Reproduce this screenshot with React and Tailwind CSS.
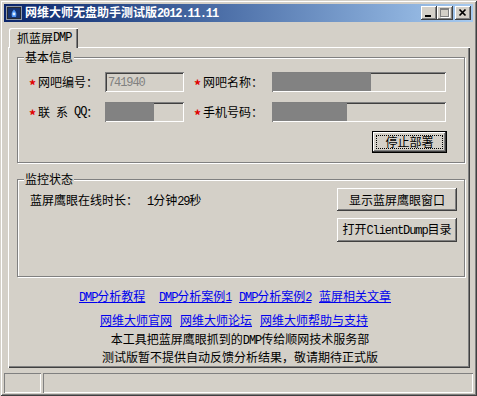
const RAISED =
  "shadow-[inset_-1px_-1px_0_#404040,inset_1px_1px_0_#ffffff,inset_-2px_-2px_0_#808080,inset_2px_2px_0_#d4d0c8]";

function L({ children }) {
  return <span className="font-['Liberation_Mono',monospace] text-[12px] tracking-[-1.1px]">{children}</span>;
}

function Icon() {
  return (
    <svg width="16" height="16" viewBox="0 0 16 16" className="shrink-0">
      <rect x="0.5" y="1.5" width="15" height="13" fill="#262a33" stroke="#8e97a8" />
      <rect x="2" y="3" width="12" height="10" fill="#17326e" />
      <path d="M8 4.5 C5.5 6.5 5.2 9.5 6 12 L10 12 C10.8 9.5 10.5 6.5 8 4.5Z" fill="#4f95f5" />
      <circle cx="8" cy="9" r="1.4" fill="#dfeeff" />
    </svg>
  );
}

function CapBtn({ children, className = "" }) {
  return (
    <div className={`w-[16px] h-[14px] bg-[#d4d0c8] ${RAISED} ${className}`}>{children}</div>
  );
}

function Star() {
  return <span className="inline-block w-[9px] text-[#e00000] text-[14px] font-bold translate-y-[3px]">*</span>;
}

function Input({ gray = 0, text, w }) {
  return (
    <div
      className={`${w} h-[20px] bg-[#d4d0c8] shadow-[inset_1px_1px_0_#808080,inset_-1px_-1px_0_#ffffff,inset_2px_2px_0_#404040,inset_-2px_-2px_0_#d4d0c8] flex items-center`}
    >
      {text ? (
        <span className="pl-[3px] text-[#808080]">{text}</span>
      ) : (
        <div className="h-[18px] bg-[#828282] self-start mt-px" style={{ width: gray }} />
      )}
    </div>
  );
}

function Btn({ children, className = "" }) {
  return (
    <div className={`bg-[#d4d0c8] flex items-center justify-center whitespace-nowrap ${RAISED} ${className}`}>
      {children}
    </div>
  );
}

function Group({ title, className = "", children }) {
  return (
    <div
      className={`relative ml-[9px] w-[448px] border border-[#808080] shadow-[inset_1px_1px_0_#ffffff,1px_1px_0_#ffffff] ${className}`}
    >
      <span className="absolute left-[6px] -top-[8px] bg-[#d4d0c8] px-[1px]">{title}</span>
      {children}
    </div>
  );
}

function A({ children, className = "" }) {
  return <span className={`text-[#0000ee] underline whitespace-nowrap ${className}`}>{children}</span>;
}

export default function App() {
  return (
    <div className="w-[477px] h-[396px] bg-[#d4d0c8] p-[4px] pb-[3px] flex flex-col font-['Noto_Sans_CJK_SC',sans-serif] text-[12px] leading-[14px] text-black overflow-hidden shadow-[inset_1px_1px_0_#d4d0c8,inset_-1px_-1px_0_#404040,inset_2px_2px_0_#ffffff,inset_-2px_-2px_0_#808080]">
      {/* title bar */}
      <div className="h-[18px] shrink-0 flex items-center bg-linear-to-r from-[#0a246a] to-[#a6caf0] pl-[2px] pr-[2px]">
        <Icon />
        <span className="ml-[3px] text-white font-bold whitespace-nowrap">
          网维大师无盘助手测试版<L>2012.11.11</L>
        </span>
        <div className="ml-auto flex items-center">
          <CapBtn>
            <svg width="16" height="14">
              <rect x="4" y="9" width="6" height="2" fill="#000" />
            </svg>
          </CapBtn>
          <CapBtn>
            <svg width="16" height="14">
              <rect x="3.5" y="2.5" width="8" height="8" fill="none" stroke="#808080" />
              <rect x="3" y="3" width="9" height="1" fill="#808080" />
              <path d="M12.5 3 V11.5 H4" fill="none" stroke="#ffffff" />
            </svg>
          </CapBtn>
          <CapBtn className="ml-[2px]">
            <svg width="16" height="14">
              <path d="M4.5 3.5 L10.5 9.5 M10.5 3.5 L4.5 9.5" stroke="#000" strokeWidth="1.7" />
            </svg>
          </CapBtn>
        </div>
      </div>

      {/* tab header */}
      <div className="mt-[6px] pl-[5px] flex shrink-0">
        <div className="relative z-10 -mb-px h-[20px] w-[69px] bg-[#d4d0c8] rounded-tl-[2px] shadow-[inset_1px_1px_0_#ffffff,inset_-1px_0_0_#404040,inset_-2px_0_0_#808080] flex items-center pl-[8px] whitespace-nowrap">
          抓蓝屏<L>DMP</L>
        </div>
      </div>

      {/* tab panel */}
      <div className="ml-[4px] w-[462px] h-[321px] shrink-0 flex flex-col shadow-[inset_1px_1px_0_#ffffff,inset_-1px_-1px_0_#404040,inset_-2px_-2px_0_#808080]">
        <Group title="基本信息" className="mt-[10px] h-[106px] pt-[14px] pl-[11px]">
          <div className="flex items-center h-[20px]">
            <span className="w-[76px] flex items-center whitespace-nowrap">
              <Star />网吧编号：
            </span>
            <Input w="w-[79px]" text={<L>741940</L>} />
            <span className="ml-[10px] w-[78px] flex items-center whitespace-nowrap">
              <Star />网吧名称：
            </span>
            <Input w="w-[174px]" gray={99} />
          </div>
          <div className="flex items-center h-[20px] mt-[10px]">
            <span className="w-[76px] flex items-center whitespace-nowrap">
              <Star />联{"\u2002"}系{"\u2002"}<L>QQ</L>：
            </span>
            <Input w="w-[79px]" gray={49} />
            <span className="ml-[10px] w-[78px] flex items-center whitespace-nowrap">
              <Star />手机号码：
            </span>
            <Input w="w-[174px]" gray={75} />
          </div>
          <div className="flex justify-end pr-[17px] mt-[9px]">
            <div className="w-[75px] h-[22px] border border-black flex">
              <Btn className="flex-1">
                <span className="w-[67px] h-[14px] leading-[12px] border border-dotted border-black flex items-center justify-center">
                  停止部署
                </span>
              </Btn>
            </div>
          </div>
        </Group>

        <Group title="监控状态" className="mt-[16px] h-[98px] flex">
          <div className="pl-[12px] pt-[13px] whitespace-nowrap">
            蓝屏鹰眼在线时长：
            <span className="ml-[9px]">
              <L>1</L>分钟<L>29</L>秒
            </span>
          </div>
          <div className="ml-auto mr-[7px] pt-[8px] flex flex-col gap-[7px]">
            <Btn className="w-[120px] h-[23px]">显示蓝屏鹰眼窗口</Btn>
            <Btn className="w-[120px] h-[24px]">
              <span>
                打开<L>ClientDump</L>目录
              </span>
            </Btn>
          </div>
        </Group>

        <div className="flex pl-[71px] mt-[12px]">
          <span className="w-[66px]"><A><L>DMP</L>分析教程</A></span>
          <span className="w-[72px] ml-[14px]"><A><L>DMP</L>分析案例<L>1</L></A></span>
          <span className="w-[72px] ml-[8px]"><A><L>DMP</L>分析案例<L>2</L></A></span>
          <span className="w-[72px] ml-[8px]"><A>蓝屏相关文章</A></span>
        </div>
        <div className="flex pl-[92px] mt-[8px]">
          <span className="w-[72px]"><A>网维大师官网</A></span>
          <span className="w-[72px] ml-[8px]"><A>网维大师论坛</A></span>
          <span className="w-[108px] ml-[8px]"><A>网维大师帮助与支持</A></span>
        </div>
        <div className="text-center mt-[5px] pl-[2px]">
          本工具把蓝屏鹰眼抓到的<L>DMP</L>传给顺网技术服务部
        </div>
        <div className="text-center mt-[2px] pl-[2px]">测试版暂不提供自动反馈分析结果，敬请期待正式版</div>
      </div>

      {/* status bar */}
      <div className="mt-[5px] flex gap-[2px] h-[20px] shrink-0">
        <div className="w-[37px] shadow-[inset_1px_1px_0_#808080,inset_-1px_-1px_0_#ffffff]" />
        <div className="flex-1 shadow-[inset_1px_1px_0_#808080,inset_-1px_-1px_0_#ffffff]" />
      </div>
    </div>
  );
}
